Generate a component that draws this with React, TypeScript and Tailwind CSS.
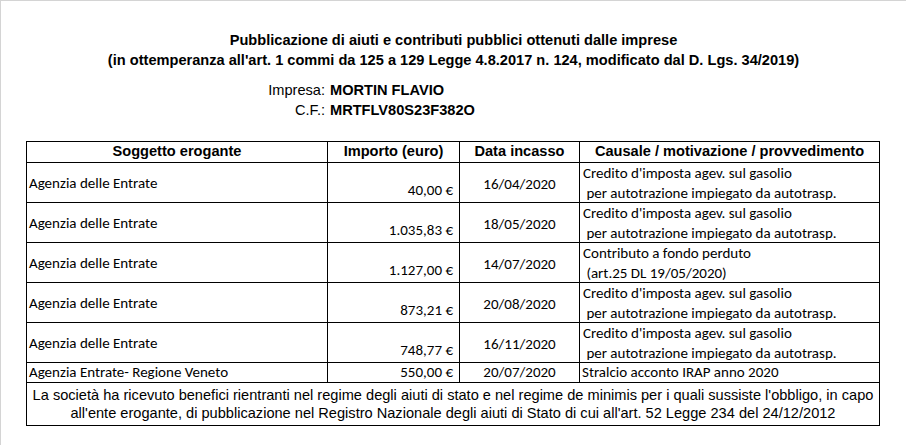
const rows = [
    { ente: "Agenzia delle Entrate", importo: "40,00 €", data: "16/04/2020", causale: ["Credito d'imposta agev. sul gasolio", " per autotrazione impiegato da autotrasp."] },
    { ente: "Agenzia delle Entrate", importo: "1.035,83 €", data: "18/05/2020", causale: ["Credito d'imposta agev. sul gasolio", " per autotrazione impiegato da autotrasp."] },
    { ente: "Agenzia delle Entrate", importo: "1.127,00 €", data: "14/07/2020", causale: ["Contributo a fondo perduto", " (art.25 DL 19/05/2020)"] },
    { ente: "Agenzia delle Entrate", importo: "873,21 €", data: "20/08/2020", causale: ["Credito d'imposta agev. sul gasolio", " per autotrazione impiegato da autotrasp."] },
    { ente: "Agenzia delle Entrate", importo: "748,77 €", data: "16/11/2020", causale: ["Credito d'imposta agev. sul gasolio", " per autotrazione impiegato da autotrasp."] },
];

const headers = ["Soggetto erogante", "Importo (euro)", "Data incasso", "Causale / motivazione / provvedimento"];

export default function App() {
    return (
        <div className="w-[914px] h-[445px] bg-white overflow-hidden">
            <div className="w-[906px] h-[445px] border-t border-l border-[#d4d4d4] text-black font-['Liberation_Sans',Arial,sans-serif]">
                {/* title */}
                <div className="pt-[29px] text-center font-bold text-[14.6px] leading-5 whitespace-nowrap">
                    <div>Pubblicazione di aiuti e contributi pubblici ottenuti dalle imprese</div>
                    <div>(in ottemperanza all'art. 1 commi da 125 a 129 Legge 4.8.2017 n. 124, modificato dal D. Lgs. 34/2019)</div>
                </div>

                <div className="mt-[10px] grid grid-cols-[324px_1fr] text-[14.6px] leading-5">
                    <div className="text-right">Impresa:</div>
                    <div className="pl-[5px] font-bold">MORTIN FLAVIO</div>
                    <div className="text-right">C.F.:</div>
                    <div className="pl-[5px] font-bold">MRTFLV80S23F382O</div>
                </div>

                {/* table */}
                <div className="ml-[25px] mt-[21px] w-[854px] border-t border-l border-black grid grid-cols-[301px_132px_120px_300px]">
                    {headers.map((h) => (
                        <div key={h} className="h-[21px] border-r border-b border-black flex items-center justify-center font-bold text-[14.6px] whitespace-nowrap">
                            {h}
                        </div>
                    ))}

                    {rows.map((r, i) => (
                        <div key={i} className="contents font-['Carlito','Lato',sans-serif] text-[15px]">
                            <div className="h-[40px] border-r border-b border-black flex items-center pl-[2px] pt-[1px] whitespace-nowrap">
                                {r.ente}
                            </div>
                            <div className="h-[40px] border-r border-b border-black flex items-end justify-end pr-[6px] pb-[1px] whitespace-nowrap">
                                {r.importo}
                            </div>
                            <div className="h-[40px] border-r border-b border-black flex items-center justify-center pt-[3px] whitespace-nowrap">
                                {r.data}
                            </div>
                            <div className="h-[40px] border-r border-b border-black pl-[3px] leading-5 whitespace-pre overflow-visible">
                                <div>{r.causale[0]}</div>
                                <div>{r.causale[1]}</div>
                            </div>
                        </div>
                    ))}

                    <div className="contents font-['Carlito','Lato',sans-serif] text-[15px]">
                        <div className="h-[20px] border-r border-b border-black flex items-center pl-[2px] whitespace-nowrap">
                            Agenzia Entrate- Regione Veneto
                        </div>
                        <div className="h-[20px] border-r border-b border-black flex items-center justify-end pr-[6px] whitespace-nowrap">
                            550,00 €
                        </div>
                        <div className="h-[20px] border-r border-b border-black flex items-center justify-center whitespace-nowrap">
                            20/07/2020
                        </div>
                        <div className="h-[20px] border-r border-b border-black flex items-center pl-[2px] whitespace-nowrap">
                            Stralcio acconto IRAP anno 2020
                        </div>
                    </div>

                    {/* note */}
                    <div className="col-span-4 h-[43px] border-r border-b border-black flex flex-col items-center justify-center text-[14.6px] leading-[18px] whitespace-nowrap">
                        <div>La società ha ricevuto benefici rientranti nel regime degli aiuti di stato e nel regime de minimis per i quali sussiste l'obbligo, in capo</div>
                        <div>all'ente erogante, di pubblicazione nel Registro Nazionale degli aiuti di Stato di cui all'art. 52 Legge 234 del 24/12/2012</div>
                    </div>
                </div>
            </div>
        </div>
    );
}
